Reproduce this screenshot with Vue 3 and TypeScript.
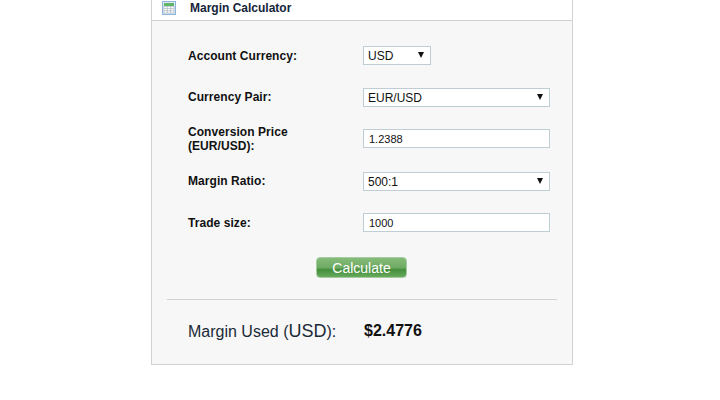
<script setup lang="ts">
interface Field {
  label: string[];
  value: string;
  kind: "short" | "select" | "input";
}
const fields: Field[] = [
  { label: ["Account Currency:"], value: "USD", kind: "short" },
  { label: ["Currency Pair:"], value: "EUR/USD", kind: "select" },
  { label: ["Conversion Price", "(EUR/USD):"], value: "1.2388", kind: "input" },
  { label: ["Margin Ratio:"], value: "500:1", kind: "select" },
  { label: ["Trade size:"], value: "1000", kind: "input" },
];
</script>

<template>
  <div class="page">
    <section class="card">
      <header class="head">
        <svg class="icon" width="14" height="14" viewBox="0 0 14 14">
          <rect x="0.5" y="0.5" width="13" height="13" fill="#dbe9f6" stroke="#8fb4dc" />
          <rect x="2" y="2" width="10" height="3" fill="#62b567" />
          <rect x="2" y="5.5" width="10" height="6.5" fill="#ffffff" stroke="#a9b4bd" stroke-width="0.6" />
          <path d="M5.3 5.5V12M8.6 5.5V12M2 7.6H12M2 9.8H12" stroke="#a9b4bd" stroke-width="0.7" fill="none" />
        </svg>
        <h1 class="title">Margin Calculator</h1>
      </header>
      <div class="body">
        <div class="form">
          <template v-for="f in fields" :key="f.value">
            <div class="label" :class="{ tight: f.kind === 'select' }">
              <div v-for="line in f.label" :key="line">{{ line }}</div>
            </div>
            <div class="control" :class="f.kind">
              <span class="value" :class="{ small: f.kind === 'input' }">{{ f.value }}</span>
              <span v-if="f.kind !== 'input'" class="arrow"></span>
            </div>
          </template>
        </div>
        <div class="actions">
          <button class="calc" type="button">Calculate</button>
        </div>
        <hr class="rule" />
        <div class="result">
          <span class="res-label">Margin Used (<span class="cur">USD</span>):</span>
          <strong class="res-value">$2.4776</strong>
        </div>
      </div>
    </section>
  </div>
</template>

<style scoped>
.page {
  width: 720px;
  height: 400px;
  background: #fff;
  overflow: hidden;
  display: flex;
  justify-content: center;
  font-family: "Liberation Sans", Arial, sans-serif;
  color: #111;
}
.card {
  box-sizing: border-box;
  width: 422px;
  height: 365px;
  margin-left: 4px;
  border: 1px solid #d2d2d2;
  border-top: 0;
  background: #f7f7f7;
}
.head {
  box-sizing: border-box;
  height: 21px;
  padding: 0 0 4px 10px;
  display: flex;
  align-items: center;
  background: #fff;
  border-bottom: 1px solid #d2d2d2;
}
.icon {
  flex: none;
}
.title {
  margin: 0 0 0 14px;
  font-size: 12px;
  font-weight: 700;
  color: #14243a;
}
.body {
  padding: 25px 15px 0;
}
.form {
  display: grid;
  grid-template-columns: 175px 187px;
  grid-template-rows: 42px 41px 43px 41px 42px;
  padding-left: 21px;
}
.label {
  font-size: 12px;
  font-weight: 700;
  line-height: 14px;
  height: 19px;
  letter-spacing: 0.06px;
  display: flex;
  flex-direction: column;
  justify-content: center;
}
.label.tight {
  height: 17px;
}
.control {
  box-sizing: border-box;
  position: relative;
  height: 19px;
  background: #fff;
  border: 1px solid #bfcdd4;
  padding-left: 4px;
  display: flex;
  align-items: center;
}
.control.short {
  width: 68px;
}
.value {
  font-size: 12px;
}
.value.small {
  font-size: 11px;
  padding-left: 1px;
}
.arrow {
  position: absolute;
  right: 6px;
  top: 5px;
  border-left: 3px solid transparent;
  border-right: 3px solid transparent;
  border-top: 6px solid #111;
}
.actions {
  display: flex;
  justify-content: center;
  margin-top: 2px;
}
.calc {
  box-sizing: border-box;
  width: 91px;
  height: 21px;
  padding: 0;
  margin-left: -1px;
  border: 1px solid #a6cba0;
  border-radius: 4px;
  background: linear-gradient(#84bb78 0%, #6fab64 50%, #438e3b 62%, #68aa5e 100%);
  color: #fff;
  font-family: inherit;
  font-size: 14px;
}
.rule {
  margin: 21px 0 0;
  border: 0;
  border-top: 1px solid #d2d2d2;
}
.result {
  display: flex;
  align-items: center;
  margin-top: 21px;
  padding-left: 21px;
  height: 20px;
}
.res-label {
  font-size: 16px;
  width: 176px;
  color: #1a2a38;
}
.cur {
  font-size: 18px;
}
.res-value {
  font-size: 16px;
}
</style>

<style>
html,
body {
  margin: 0;
  background: #fff;
}
</style>
